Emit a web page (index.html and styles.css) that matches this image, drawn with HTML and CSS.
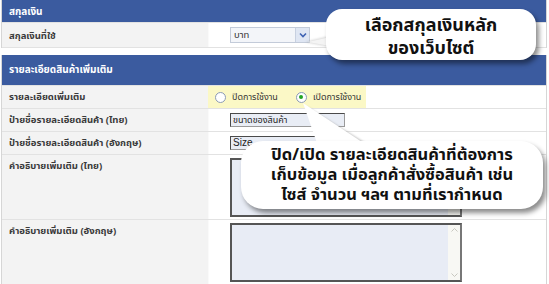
FILE: index.html
```html
<!DOCTYPE html>
<html lang="th">
<head>
    <meta charset="UTF-8">
    <title>ตั้งค่าร้านค้า</title>
    <link rel="stylesheet" href="styles.css">
</head>
<body>
    <div class="page">
        <div class="panel">
            <div class="panel-head">สกุลเงิน</div>
            <div class="row row-short">
                <div class="label">สกุลเงินที่ใช้</div>
                <div class="value">
                    <div class="select">
                        <span class="select-text">บาท</span>
                        <span class="select-btn">
                            <svg width="8" height="6" viewBox="0 0 8 6"><path d="M1 1.5 L4 4.5 L7 1.5" fill="none" stroke="#3f63b3" stroke-width="1.6"/></svg>
                        </span>
                    </div>
                </div>
            </div>
        </div>

        <div class="panel panel-second">
            <div class="panel-head panel-head-tall">รายละเอียดสินค้าเพิ่มเติม</div>
            <div class="row">
                <div class="label">รายละเอียดเพิ่มเติม</div>
                <div class="value">
                    <div class="radios">
                        <span class="radio"></span><span class="radio-label">ปิดการใช้งาน</span>
                        <span class="radio radio-on"></span><span class="radio-label">เปิดการใช้งาน</span>
                    </div>
                </div>
            </div>
            <div class="row">
                <div class="label">ป้ายชื่อรายละเอียดสินค้า (ไทย)</div>
                <div class="value"><div class="input">ขนาดของสินค้า</div></div>
            </div>
            <div class="row">
                <div class="label">ป้ายชื่อรายละเอียดสินค้า (อังกฤษ)</div>
                <div class="value"><div class="input input-en">Size</div></div>
            </div>
            <div class="row row-tall">
                <div class="label">คำอธิบายเพิ่มเติม (ไทย)</div>
                <div class="value"><div class="textarea"><span class="scroll"></span></div></div>
            </div>
            <div class="row row-tall row-last">
                <div class="label">คำอธิบายเพิ่มเติม (อังกฤษ)</div>
                <div class="value">
                    <div class="textarea">
                        <span class="scroll">
                            <svg width="9" height="6" viewBox="0 0 9 6"><path d="M1.5 4.5 L4.5 1.5 L7.5 4.5" fill="none" stroke="#c8c8c0" stroke-width="1"/></svg>
                            <svg width="9" height="6" viewBox="0 0 9 6"><path d="M1.5 1.5 L4.5 4.5 L7.5 1.5" fill="none" stroke="#c8c8c0" stroke-width="1"/></svg>
                        </span>
                    </div>
                </div>
            </div>
        </div>

        <!-- callout tails -->
        <svg class="tails" width="549" height="284" viewBox="0 0 549 284">
            <defs>
                <filter id="soft" x="-20%" y="-20%" width="140%" height="140%">
                    <feGaussianBlur stdDeviation="1.2"/>
                </filter>
            </defs>
            <polygon points="305,42 330,36 330,47" fill="#9a9a9a" opacity="0.4" filter="url(#soft)"/>
            <polygon points="308,42 330,37 330,46" fill="#f4f4f4"/>
            <polygon points="306,106 322,146 370,146" fill="#8a8a8a" opacity="0.55" filter="url(#soft)"/>
            <polygon points="303,103 318,146 368,146" fill="#ffffff"/>
        </svg>

        <div class="callout callout-currency">
            <div class="callout-line">เลือกสกุลเงินหลัก</div>
            <div class="callout-line">ของเว็บไซต์</div>
        </div>
        <div class="callout callout-detail">
            <div class="callout-line">ปิด/เปิด รายละเอียดสินค้าที่ต้องการ</div>
            <div class="callout-line">เก็บข้อมูล เมื่อลูกค้าสั่งซื้อสินค้า เช่น</div>
            <div class="callout-line">ไซส์ จำนวน ฯลฯ ตามที่เรากำหนด</div>
        </div>
    </div>
</body>
</html>
```

FILE: styles.css
```css
body {
    margin: 0;
    padding: 0;
    background-color: #ffffff;
    font-family: Tahoma, "Noto Sans Thai", "Noto Sans", "DejaVu Sans", sans-serif;
}

.page {
    position: relative;
    width: 549px;
    height: 284px;
    overflow: hidden;
}

.panel {
    width: 544px;
    margin-left: 1px;
    border-left: 1px solid #d6d6d6;
    border-right: 1px solid #d6d6d6;
}

.panel-second {
    margin-top: 7px;
    border-bottom: 1px solid #d6d6d6;
}

.panel-head {
    height: 22px;
    padding-left: 7px;
    background-color: #3b5b9f;
    color: #ffffff;
    font-size: 10px;
    font-weight: bold;
    line-height: 24px;
    border-bottom: 1px solid #e2e2e2;
}

.panel-head-tall {
    height: 30px;
    line-height: 30px;
}

.row {
    display: grid;
    grid-template-columns: 207px 1fr;
    height: 22px;
    border-bottom: 1px solid #e2e2e2;
}

.row-short {
    height: 24px;
}

.row-tall {
    height: 64px;
}

.row-last {
    border-bottom: none;
}

.label {
    padding: 5px 0 0 7px;
    background-color: #f3f3f3;
    color: #3a3a3a;
    font-size: 9.5px;
    font-weight: bold;
    line-height: 12px;
    border-right: 1px solid #fafafa;
}

.row-short .label {
    padding-top: 7px;
}

.value {
    display: flex;
    align-items: center;
    padding-left: 21px;
}

.row-tall .value {
    align-items: flex-start;
    padding-top: 3px;
}

.select {
    display: flex;
    width: 78px;
    height: 14px;
    border: 1px solid #c3cbd9;
    background-color: #f3f5f9;
}

.select-text {
    flex: 1;
    padding-left: 3px;
    font-size: 9.5px;
    line-height: 14px;
    color: #333333;
}

.select-btn {
    display: flex;
    align-items: center;
    justify-content: center;
    width: 13px;
    background-color: #dfe6f3;
    border-left: 1px solid #c7d0e0;
}

.radios {
    display: flex;
    align-items: center;
    height: 22px;
    margin-left: -22px;
    padding: 0 5px 0 7px;
    background-color: #fbf8c6;
}

.radio {
    width: 9px;
    height: 9px;
    border: 1px solid #8c9bb5;
    border-radius: 50%;
    background-color: #ffffff;
    position: relative;
}

.radio-on::after {
    content: "";
    position: absolute;
    left: 2.5px;
    top: 2.5px;
    width: 4px;
    height: 4px;
    border-radius: 50%;
    background-color: #23a423;
}

.radio-label {
    margin: 0 18px 0 6px;
    font-size: 9px;
    color: #333333;
}

.radio-label:last-child {
    margin-right: 0;
}

.input {
    width: 111px;
    height: 12px;
    padding-left: 2px;
    border: 1px solid #4a4a4a;
    border-right-color: #9a9a9a;
    border-bottom-color: #9a9a9a;
    background-color: #e9edf5;
    font-size: 9px;
    line-height: 12px;
    color: #222222;
}

.input-en {
    font-family: "Liberation Sans", Arial, sans-serif;
    font-size: 10px;
}

.textarea {
    display: flex;
    justify-content: flex-end;
    width: 228px;
    height: 55px;
    border: 2px solid #555555;
    border-right-color: #777777;
    background-color: #e8ecf5;
}

.scroll {
    display: flex;
    flex-direction: column;
    justify-content: space-between;
    align-items: center;
    width: 12px;
    padding: 2px 0;
    background-color: #f8f8f4;
}

.tails {
    position: absolute;
    left: 0;
    top: 0;
}

.callout {
    position: absolute;
    display: flex;
    flex-direction: column;
    align-items: center;
    justify-content: center;
    box-sizing: border-box;
    background-color: #ffffff;
    border-radius: 16px;
    box-shadow: 3px 4px 5px rgba(0, 0, 0, 0.45);
    color: #111111;
    font-weight: bold;
    white-space: nowrap;
}

.callout-currency {
    left: 326px;
    top: 9px;
    width: 210px;
    height: 51px;
    padding-top: 4px;
    font-size: 18px;
}

.callout-currency .callout-line {
    height: 23px;
    line-height: 23px;
}

.callout-detail {
    left: 241px;
    top: 141px;
    width: 302px;
    height: 68px;
    font-size: 16.5px;
    border-radius: 22px;
}

.callout-detail .callout-line {
    height: 20px;
    line-height: 20px;
}
```
